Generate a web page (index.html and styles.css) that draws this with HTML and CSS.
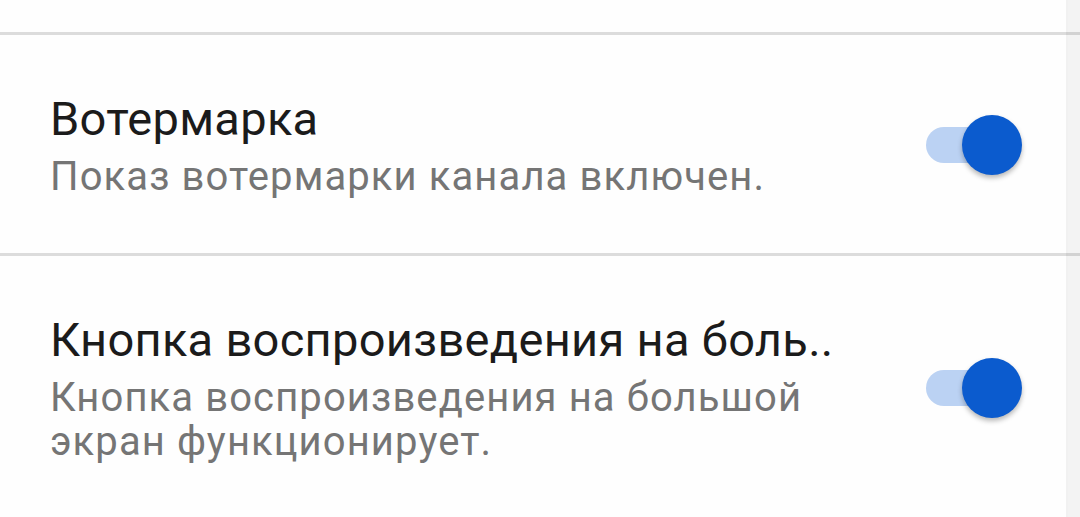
FILE: index.html
```html
<!DOCTYPE html>
<html lang="ru">
<head>
    <meta charset="UTF-8">
    <meta name="viewport" content="width=device-width, initial-scale=1.0">
    <title>Настройки плеера</title>
    <link rel="stylesheet" href="styles.css">
</head>
<body>

<div class="settings">
    <!-- tail of the row above, scrolled out of view -->
    <div class="pref-tail"></div>

    <!-- Watermark -->
    <div class="pref">
        <div class="pref-text">
            <div class="pref-title">Вотермарка</div>
            <div class="pref-summary">Показ вотермарки канала включен.</div>
        </div>
        <div class="switch is-on">
            <span class="switch-track"></span>
            <span class="switch-thumb"></span>
        </div>
    </div>

    <!-- Big screen play button -->
    <div class="pref">
        <div class="pref-text">
            <div class="pref-title">Кнопка воспроизведения на боль..</div>
            <div class="pref-summary">Кнопка воспроизведения на большой экран функционирует.</div>
        </div>
        <div class="switch is-on">
            <span class="switch-track"></span>
            <span class="switch-thumb"></span>
        </div>
    </div>
</div>

<div class="scroll-rail"></div>

</body>
</html>
```

FILE: styles.css
```css
body { margin: 0; background-color: #fefefe; font-family: Roboto, "Noto Sans", sans-serif; overflow: hidden; }

.settings { display: flex; flex-direction: column; }
.pref-tail { height: 32px; }

.pref { display: flex; align-items: center; border-top: 3px solid #dcdcdc; padding: 56px 0 54px 50px; }
.pref-text { width: 830px; }
.pref-title { font-size: 47px; line-height: 55px; letter-spacing: 0.3px; color: #1b1b1b; white-space: nowrap; margin-bottom: 9px; }
.pref-summary { font-size: 40px; line-height: 44px; letter-spacing: 1.1px; color: #757575; }

/* material style switch, thumb sits over the right end of the track */
.switch { position: relative; width: 96px; height: 60px; margin-left: auto; margin-right: 58px; }
.switch-track { position: absolute; left: 0; top: 12px; width: 88px; height: 36px; border-radius: 18px; background-color: #bbd2f3; }
.switch-thumb { position: absolute; right: 0; top: 0; width: 60px; height: 60px; border-radius: 50%; background-color: #0b5bce; box-shadow: 0 3px 5px rgba(0, 0, 0, 0.28); }

.scroll-rail { position: fixed; top: 0; right: 0; bottom: 0; width: 12px; background-color: rgba(0, 0, 0, 0.045); border-left: 2px solid rgba(0, 0, 0, 0.012); }
```
